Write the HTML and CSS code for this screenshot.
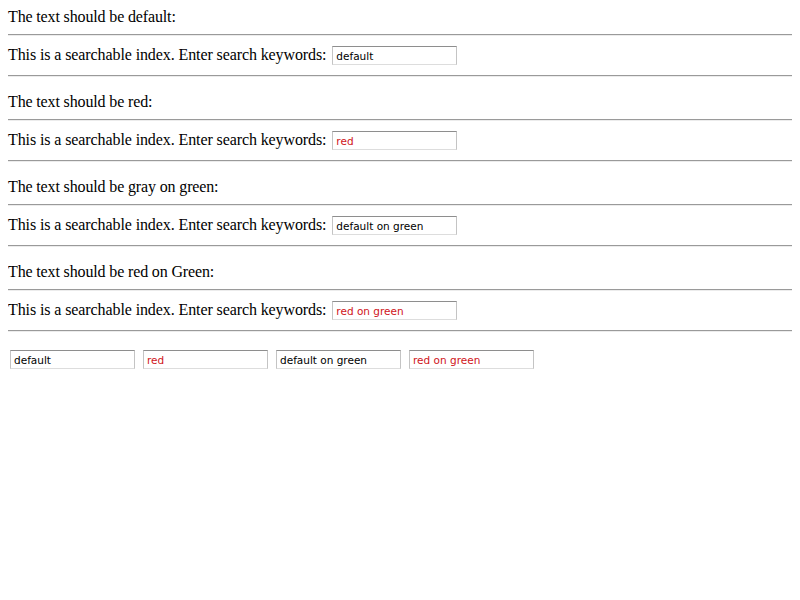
FILE: index.html
```html
<!DOCTYPE html>
<html>
<head>
<meta charset="utf-8">
<title>isindex</title>
<link rel="stylesheet" href="styles.css">
</head>
<body>
<div class="block">
  <p class="label first">The text should be default:</p>
  <hr class="rule">
  <div class="search">This is a searchable index. Enter search keywords: <input class="field" type="text" value="default"></div>
  <hr class="rule">
</div>
<div class="block">
  <p class="label">The text should be red:</p>
  <hr class="rule">
  <div class="search">This is a searchable index. Enter search keywords: <input class="field red" type="text" value="red"></div>
  <hr class="rule">
</div>
<div class="block">
  <p class="label">The text should be gray on green:</p>
  <hr class="rule">
  <div class="search">This is a searchable index. Enter search keywords: <input class="field" type="text" value="default on green"></div>
  <hr class="rule">
</div>
<div class="block">
  <p class="label">The text should be red on Green:</p>
  <hr class="rule">
  <div class="search">This is a searchable index. Enter search keywords: <input class="field red" type="text" value="red on green"></div>
  <hr class="rule">
</div>
<p class="inputs"><input class="field" type="text" value="default"> <input class="field red" type="text" value="red"> <input class="field" type="text" value="default on green"> <input class="field red" type="text" value="red on green"></p>
</body>
</html>
```

FILE: styles.css
```css
html, body {
  background: #ffffff;
}
body {
  margin: 8px;
  font-family: "Liberation Serif", "Times New Roman", serif;
  font-size: 16px;
  color: #000;
}
.label {
  margin: 16px 0 0 0;
  letter-spacing: -0.14px;
}
.label.first {
  margin-top: 0;
}
.rule {
  margin: 8px 0;
  height: 0;
  border: none;
  border-top: 1px solid #9a9a9a;
  border-bottom: 1px solid #ececec;
}
.search {
  margin: 0;
  letter-spacing: -0.1px;
}
.field {
  box-sizing: border-box;
  width: 125px;
  height: 19px;
  margin: 2px;
  padding: 0 3px;
  font-family: "DejaVu Sans", Verdana, sans-serif;
  font-size: 10.5px;
  letter-spacing: 0;
  color: #000;
  background: #fff;
  border-style: solid;
  border-width: 1px;
  border-color: #8e8e8e #c4c4c4 #dddddd #c4c4c4;
  vertical-align: baseline;
  outline: none;
}
.field.red {
  color: #d0141a;
}
.inputs {
  margin: 16px 0;
}
```
